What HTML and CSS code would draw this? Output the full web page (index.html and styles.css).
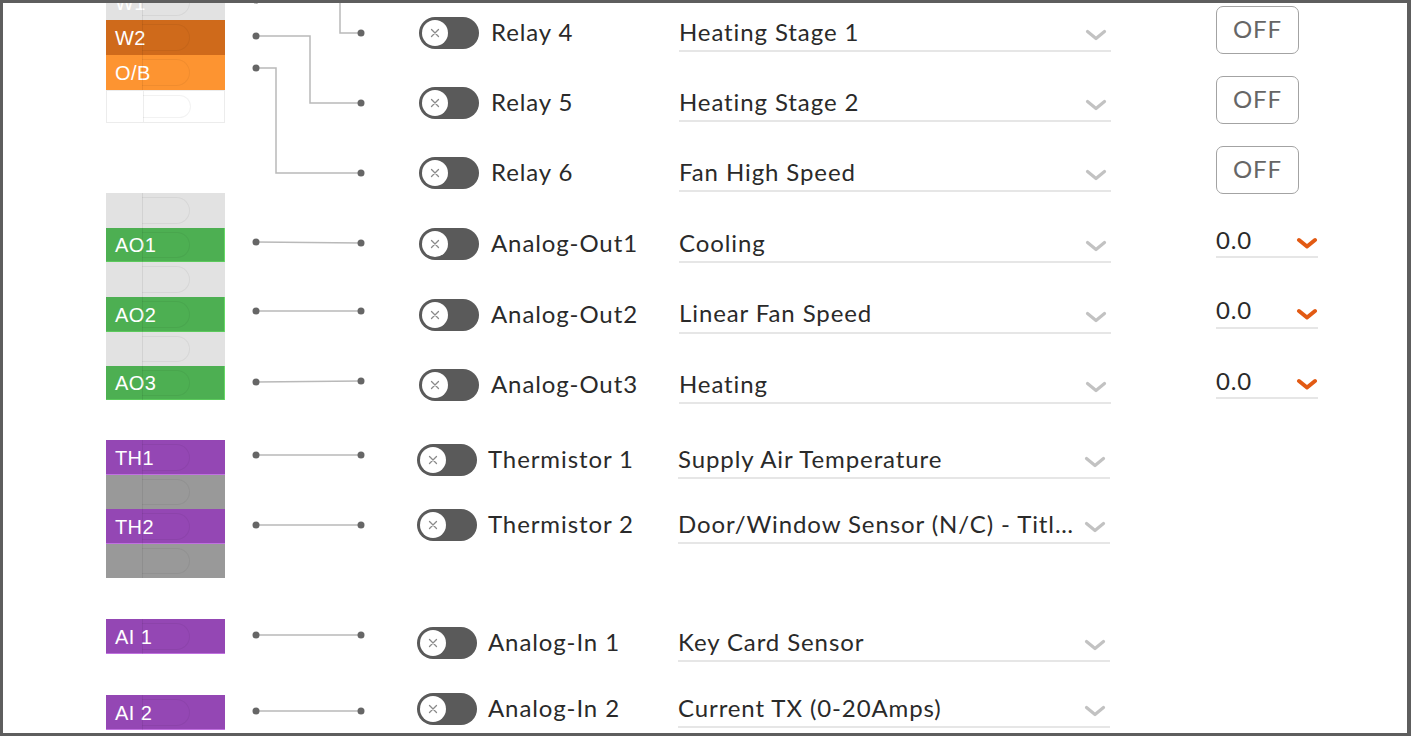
FILE: index.html
```html
<!DOCTYPE html>
<html lang="en">
<head>
<meta charset="utf-8">
<title>IO Configuration</title>
<link rel="stylesheet" href="styles.css">
</head>
<body>
<div class="frame">
  <div class="board">
    <div class="terminals">
      <div class="term term--light term--w1">W1</div>
      <div class="term term--orange-dark">W2</div>
      <div class="term term--orange">O/B</div>
      <div class="term term--blank term--short"></div>

      <div class="term term--light term--gap-ao"></div>
      <div class="term term--green term--s">AO1</div>
      <div class="term term--light"></div>
      <div class="term term--green">AO2</div>
      <div class="term term--light term--s"></div>
      <div class="term term--green term--s">AO3</div>

      <div class="term term--purple term--gap-th">TH1</div>
      <div class="term term--grey term--s"></div>
      <div class="term term--purple">TH2</div>
      <div class="term term--grey term--s"></div>

      <div class="term term--purple term--gap-ai">AI 1</div>
      <div class="term term--purple term--gap-ai2">AI 2</div>
    </div>

    <svg class="wires" width="192" height="730" viewBox="0 0 192 730">
      <g fill="none" stroke="#b9b9b9" stroke-width="1.5">
        <path d="M31 -3 H115 V30 H136"/>
        <path d="M31 33 H85 V100 H136"/>
        <path d="M31 65 H51 V170 H136"/>
        <path d="M31 239 L136 240"/>
        <path d="M31 308 H136"/>
        <path d="M31 379 L136 378"/>
        <path d="M31 452 H136"/>
        <path d="M31 522 H136"/>
        <path d="M31 632 H136"/>
        <path d="M31 708 H136"/>
      </g>
      <g fill="#666">
        <circle cx="31" cy="-3" r="3.5"/>
        <circle cx="31" cy="33" r="3.5"/>
        <circle cx="31" cy="65" r="3.5"/>
        <circle cx="136" cy="30" r="3.5"/>
        <circle cx="136" cy="100" r="3.5"/>
        <circle cx="136" cy="170" r="3.5"/>
        <circle cx="31" cy="239" r="3.5"/>
        <circle cx="136" cy="240" r="3.5"/>
        <circle cx="31" cy="308" r="3.5"/>
        <circle cx="136" cy="308" r="3.5"/>
        <circle cx="31" cy="379" r="3.5"/>
        <circle cx="136" cy="378" r="3.5"/>
        <circle cx="31" cy="452" r="3.5"/>
        <circle cx="136" cy="452" r="3.5"/>
        <circle cx="31" cy="522" r="3.5"/>
        <circle cx="136" cy="522" r="3.5"/>
        <circle cx="31" cy="632" r="3.5"/>
        <circle cx="136" cy="632" r="3.5"/>
        <circle cx="31" cy="708" r="3.5"/>
        <circle cx="136" cy="708" r="3.5"/>
      </g>
    </svg>

    <div class="channels">
      <div class="group group--relay">
        <div class="row">
          <span class="toggle"><span class="knob"><svg width="10" height="10" viewBox="0 0 10 10"><path d="M1.5 1.5 L8.5 8.5 M8.5 1.5 L1.5 8.5" stroke="#8a8a8a" stroke-width="1.3" stroke-linecap="round"/></svg></span></span>
          <span class="label">Relay 4</span>
          <div class="select"><span class="select-text">Heating Stage 1</span><svg class="chev" width="22" height="12" viewBox="0 0 22 12"><path d="M2.5 2.5 L11 9.5 L19.5 2.5" fill="none" stroke="#c2c2c2" stroke-width="3.2" stroke-linecap="round" stroke-linejoin="round"/></svg></div>
          <div class="extra"><button class="off-btn" type="button">OFF</button></div>
        </div>
        <div class="row">
          <span class="toggle"><span class="knob"><svg width="10" height="10" viewBox="0 0 10 10"><path d="M1.5 1.5 L8.5 8.5 M8.5 1.5 L1.5 8.5" stroke="#8a8a8a" stroke-width="1.3" stroke-linecap="round"/></svg></span></span>
          <span class="label">Relay 5</span>
          <div class="select"><span class="select-text">Heating Stage 2</span><svg class="chev" width="22" height="12" viewBox="0 0 22 12"><path d="M2.5 2.5 L11 9.5 L19.5 2.5" fill="none" stroke="#c2c2c2" stroke-width="3.2" stroke-linecap="round" stroke-linejoin="round"/></svg></div>
          <div class="extra"><button class="off-btn" type="button">OFF</button></div>
        </div>
        <div class="row">
          <span class="toggle"><span class="knob"><svg width="10" height="10" viewBox="0 0 10 10"><path d="M1.5 1.5 L8.5 8.5 M8.5 1.5 L1.5 8.5" stroke="#8a8a8a" stroke-width="1.3" stroke-linecap="round"/></svg></span></span>
          <span class="label">Relay 6</span>
          <div class="select"><span class="select-text">Fan High Speed</span><svg class="chev" width="22" height="12" viewBox="0 0 22 12"><path d="M2.5 2.5 L11 9.5 L19.5 2.5" fill="none" stroke="#c2c2c2" stroke-width="3.2" stroke-linecap="round" stroke-linejoin="round"/></svg></div>
          <div class="extra"><button class="off-btn" type="button">OFF</button></div>
        </div>
      </div>

      <div class="group group--ao">
        <div class="row">
          <span class="toggle"><span class="knob"><svg width="10" height="10" viewBox="0 0 10 10"><path d="M1.5 1.5 L8.5 8.5 M8.5 1.5 L1.5 8.5" stroke="#8a8a8a" stroke-width="1.3" stroke-linecap="round"/></svg></span></span>
          <span class="label">Analog-Out1</span>
          <div class="select"><span class="select-text">Cooling</span><svg class="chev" width="22" height="12" viewBox="0 0 22 12"><path d="M2.5 2.5 L11 9.5 L19.5 2.5" fill="none" stroke="#c2c2c2" stroke-width="3.2" stroke-linecap="round" stroke-linejoin="round"/></svg></div>
          <div class="extra"><div class="value"><span>0.0</span><svg class="chev-orange" width="22" height="12" viewBox="0 0 22 12"><path d="M3 3 L11 9.5 L19 3" fill="none" stroke="#e25a13" stroke-width="4" stroke-linecap="round" stroke-linejoin="round"/></svg></div></div>
        </div>
        <div class="row">
          <span class="toggle"><span class="knob"><svg width="10" height="10" viewBox="0 0 10 10"><path d="M1.5 1.5 L8.5 8.5 M8.5 1.5 L1.5 8.5" stroke="#8a8a8a" stroke-width="1.3" stroke-linecap="round"/></svg></span></span>
          <span class="label">Analog-Out2</span>
          <div class="select"><span class="select-text">Linear Fan Speed</span><svg class="chev" width="22" height="12" viewBox="0 0 22 12"><path d="M2.5 2.5 L11 9.5 L19.5 2.5" fill="none" stroke="#c2c2c2" stroke-width="3.2" stroke-linecap="round" stroke-linejoin="round"/></svg></div>
          <div class="extra"><div class="value"><span>0.0</span><svg class="chev-orange" width="22" height="12" viewBox="0 0 22 12"><path d="M3 3 L11 9.5 L19 3" fill="none" stroke="#e25a13" stroke-width="4" stroke-linecap="round" stroke-linejoin="round"/></svg></div></div>
        </div>
        <div class="row">
          <span class="toggle"><span class="knob"><svg width="10" height="10" viewBox="0 0 10 10"><path d="M1.5 1.5 L8.5 8.5 M8.5 1.5 L1.5 8.5" stroke="#8a8a8a" stroke-width="1.3" stroke-linecap="round"/></svg></span></span>
          <span class="label">Analog-Out3</span>
          <div class="select"><span class="select-text">Heating</span><svg class="chev" width="22" height="12" viewBox="0 0 22 12"><path d="M2.5 2.5 L11 9.5 L19.5 2.5" fill="none" stroke="#c2c2c2" stroke-width="3.2" stroke-linecap="round" stroke-linejoin="round"/></svg></div>
          <div class="extra"><div class="value"><span>0.0</span><svg class="chev-orange" width="22" height="12" viewBox="0 0 22 12"><path d="M3 3 L11 9.5 L19 3" fill="none" stroke="#e25a13" stroke-width="4" stroke-linecap="round" stroke-linejoin="round"/></svg></div></div>
        </div>
      </div>

      <div class="group group--th">
        <div class="row row--input">
          <span class="toggle"><span class="knob"><svg width="10" height="10" viewBox="0 0 10 10"><path d="M1.5 1.5 L8.5 8.5 M8.5 1.5 L1.5 8.5" stroke="#8a8a8a" stroke-width="1.3" stroke-linecap="round"/></svg></span></span>
          <span class="label">Thermistor 1</span>
          <div class="select"><span class="select-text">Supply Air Temperature</span><svg class="chev" width="22" height="12" viewBox="0 0 22 12"><path d="M2.5 2.5 L11 9.5 L19.5 2.5" fill="none" stroke="#c2c2c2" stroke-width="3.2" stroke-linecap="round" stroke-linejoin="round"/></svg></div>
        </div>
        <div class="row row--input">
          <span class="toggle"><span class="knob"><svg width="10" height="10" viewBox="0 0 10 10"><path d="M1.5 1.5 L8.5 8.5 M8.5 1.5 L1.5 8.5" stroke="#8a8a8a" stroke-width="1.3" stroke-linecap="round"/></svg></span></span>
          <span class="label">Thermistor 2</span>
          <div class="select"><span class="select-text">Door/Window Sensor (N/C) - Title 24</span><svg class="chev" width="22" height="12" viewBox="0 0 22 12"><path d="M2.5 2.5 L11 9.5 L19.5 2.5" fill="none" stroke="#c2c2c2" stroke-width="3.2" stroke-linecap="round" stroke-linejoin="round"/></svg></div>
        </div>
      </div>

      <div class="group group--ai">
        <div class="row row--input">
          <span class="toggle"><span class="knob"><svg width="10" height="10" viewBox="0 0 10 10"><path d="M1.5 1.5 L8.5 8.5 M8.5 1.5 L1.5 8.5" stroke="#8a8a8a" stroke-width="1.3" stroke-linecap="round"/></svg></span></span>
          <span class="label">Analog-In 1</span>
          <div class="select"><span class="select-text">Key Card Sensor</span><svg class="chev" width="22" height="12" viewBox="0 0 22 12"><path d="M2.5 2.5 L11 9.5 L19.5 2.5" fill="none" stroke="#c2c2c2" stroke-width="3.2" stroke-linecap="round" stroke-linejoin="round"/></svg></div>
        </div>
        <div class="row row--input">
          <span class="toggle"><span class="knob"><svg width="10" height="10" viewBox="0 0 10 10"><path d="M1.5 1.5 L8.5 8.5 M8.5 1.5 L1.5 8.5" stroke="#8a8a8a" stroke-width="1.3" stroke-linecap="round"/></svg></span></span>
          <span class="label">Analog-In 2</span>
          <div class="select"><span class="select-text">Current TX (0-20Amps)</span><svg class="chev" width="22" height="12" viewBox="0 0 22 12"><path d="M2.5 2.5 L11 9.5 L19.5 2.5" fill="none" stroke="#c2c2c2" stroke-width="3.2" stroke-linecap="round" stroke-linejoin="round"/></svg></div>
        </div>
      </div>
    </div>
  </div>
</div>
</body>
</html>
```

FILE: styles.css
```css
html, body {
  margin: 0;
  padding: 0;
  background: #ffffff;
}

.frame {
  width: 1411px;
  height: 736px;
  box-sizing: border-box;
  border: 3px solid #5e5e5e;
  border-right-width: 4px;
  background: #ffffff;
  overflow: hidden;
}

.board {
  display: flex;
  align-items: flex-start;
  padding-left: 103px;
}

/* Terminal strip */
.terminals {
  width: 119px;
  flex: none;
  display: flex;
  flex-direction: column;
}

.term {
  position: relative;
  height: 35px;
  box-sizing: border-box;
  padding-left: 9px;
  padding-top: 1px;
  display: flex;
  align-items: center;
  font-family: "Liberation Sans", Arial, sans-serif;
  font-size: 20px;
  letter-spacing: 0.4px;
  color: #ffffff;
  overflow: hidden;
}

.term::before {
  content: "";
  position: absolute;
  left: 36px;
  top: 0;
  bottom: 0;
  border-left: 1px solid rgba(0, 0, 0, 0.07);
}

.term::after {
  content: "";
  position: absolute;
  left: 36px;
  top: 4px;
  bottom: 4px;
  width: 47px;
  border: 1px solid rgba(0, 0, 0, 0.05);
  border-left: none;
  border-radius: 0 14px 14px 0;
}

.term--s { height: 34px; }
.term--short { height: 33px; }

.term--w1 { margin-top: -18px; }
.term--gap-ao { margin-top: 70px; }
.term--gap-th { margin-top: 40px; }
.term--gap-ai { margin-top: 41px; }
.term--gap-ai2 { margin-top: 41px; }

.term--light { background: #e2e2e2; }
.term--orange-dark { background: #cf6a1b; }
.term--orange { background: #fd9431; }
.term--blank {
  background: #ffffff;
  border: 1px solid #ececec;
}
.term--green {
  background: #4daf52;
  box-shadow: inset -1px 0 0 #66d966, inset 0 -1px 0 #5cc95c;
}
.term--purple {
  background: #9447b4;
  box-shadow: inset 0 -1px 0 #c070e0;
}
.term--grey { background: #999999; }

/* Wires */
.wires {
  flex: none;
  display: block;
  overflow: visible;
}

/* Channel rows */
.channels {
  flex: 1;
  display: flex;
  flex-direction: column;
  font-family: Lato, "Liberation Sans", sans-serif;
  color: #2a2a2a;
}

.group {
  display: flex;
  flex-direction: column;
}

.group--relay { gap: 10px; }
.group--ao { gap: 10.5px; margin-top: 11px; }
.group--th { gap: 5px; margin-top: 15px; }
.group--ai { gap: 6px; margin-top: 58px; }

.row {
  height: 60px;
  display: flex;
  align-items: center;
}

.toggle {
  flex: none;
  margin-left: 2px;
  width: 60px;
  height: 32px;
  box-sizing: border-box;
  padding-left: 3px;
  border-radius: 16px;
  background: #5a5a5a;
  display: flex;
  align-items: center;
}

.knob {
  width: 26px;
  height: 26px;
  border-radius: 50%;
  background: #ffffff;
  display: flex;
  align-items: center;
  justify-content: center;
}

.knob svg { display: block; }

.label {
  flex: none;
  width: 188px;
  margin-left: 12px;
  padding-bottom: 3px;
  font-size: 24px;
  letter-spacing: 0.9px;
  white-space: nowrap;
}

.row--input .toggle { margin-left: 0; }
.row--input .label { margin-left: 11px; width: 190px; }

.select {
  flex: none;
  width: 432px;
  height: 36px;
  border-bottom: 2px solid #e6e6e6;
  display: flex;
  align-items: center;
  font-size: 24px;
  letter-spacing: 0.9px;
}

.select-text {
  width: 399px;
  padding-bottom: 2px;
  white-space: nowrap;
  overflow: hidden;
  text-overflow: ellipsis;
}

.chev {
  flex: none;
  display: block;
  margin-left: auto;
  margin-right: 4px;
  margin-top: 6px;
}

.extra {
  flex: none;
  margin-left: 105px;
}

.off-btn {
  display: block;
  width: 83px;
  height: 48px;
  margin-top: -6px;
  padding: 0 0 3px;
  background: #ffffff;
  border: 1px solid #a3a3a3;
  border-radius: 7px;
  font-family: Lato, "Liberation Sans", sans-serif;
  font-size: 24px;
  letter-spacing: 0.8px;
  color: #666666;
}

.value {
  width: 102px;
  height: 34px;
  margin-bottom: 8px;
  border-bottom: 2px solid #e6e6e6;
  display: flex;
  align-items: center;
  justify-content: space-between;
  font-size: 24px;
  letter-spacing: 0.8px;
  color: #2a2a2a;
}

.chev-orange {
  display: block;
  margin-top: 8px;
}
```
